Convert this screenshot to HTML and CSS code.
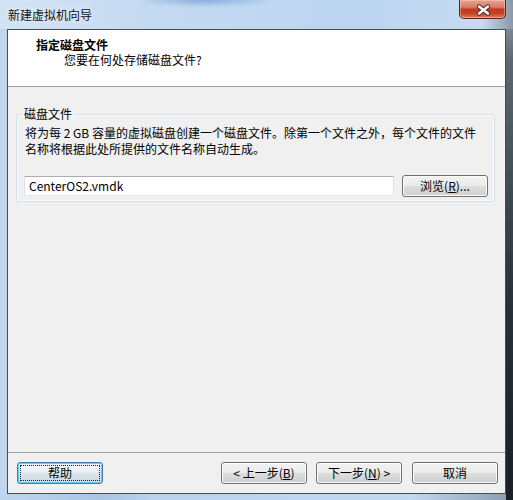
FILE: index.html
```html
<!DOCTYPE html>
<html lang="zh-CN">
<head>
<meta charset="utf-8">
<title>新建虚拟机向导</title>
<link rel="stylesheet" href="styles.css">
</head>
<body>
<div class="window">
  <div class="titlebar">
    <span class="title">新建虚拟机向导</span>
    <div class="close">
      <svg width="47" height="19" viewBox="0 0 47 19">
        <path d="M20 6.5 L29 13.5 M29 6.5 L20 13.5" stroke="#4a2a24" stroke-width="4.4" stroke-linecap="round" fill="none"/>
        <path d="M20 6.5 L29 13.5 M29 6.5 L20 13.5" stroke="#ffffff" stroke-width="2.4" stroke-linecap="round" fill="none"/>
      </svg>
    </div>
  </div>
  <div class="client">
    <div class="header">
      <div class="h-title">指定磁盘文件</div>
      <div class="h-sub">您要在何处存储磁盘文件?</div>
    </div>
    <div class="content">
      <fieldset class="group">
        <legend class="group-label">磁盘文件</legend>
        <p class="desc"><span class="line">将为每 2 GB 容量的虚拟磁盘创建一个磁盘文件。除第一个文件之外，每个文件的文件</span><span class="line">名称将根据此处所提供的文件名称自动生成。</span></p>
        <div class="file-row">
          <div class="input">CenterOS2.vmdk</div>
          <button class="btn browse">浏览(<u>R</u>)...</button>
        </div>
      </fieldset>
    </div>
    <div class="footer">
      <button class="btn focused"><span class="focus-ring">帮助</span></button>
      <div class="spacer"></div>
      <button class="btn">&lt; 上一步(<u>B</u>)</button>
      <button class="btn next">下一步(<u>N</u>) &gt;</button>
      <button class="btn cancel">取消</button>
    </div>
  </div>
</div>
</body>
</html>
```

FILE: styles.css
```css
html, body {
  margin: 0;
  padding: 0;
}

body {
  width: 513px;
  height: 500px;
  overflow: hidden;
  font-family: "Noto Sans CJK SC", "Noto Sans", sans-serif;
  font-size: 12px;
  color: #000;
}

.window {
  width: 513px;
  height: 500px;
  box-sizing: border-box;
  padding-bottom: 6px;
  display: flex;
  flex-direction: column;
  background:
    linear-gradient(to bottom, #9aa6b0 0%, #5c6873 12%, #27313a 60%, #1a2026 100%) right top / 7px 100% no-repeat,
    linear-gradient(to right, #c0d6ee 0%, #a9c4e4 20%, #bad2ee 30%, #c3d9f1 80%, #8c9eb0 99%);
}

.titlebar {
  height: 29px;
  flex: none;
  display: flex;
  justify-content: space-between;
  align-items: flex-start;
  padding-left: 8px;
  background:
    radial-gradient(ellipse 70px 8px at 205px 0px, rgba(120, 160, 215, 0.75), rgba(120, 160, 215, 0) 100%),
    linear-gradient(to right, #d2e3f5 0%, #c4daf2 30%, #bcd5f0 70%, #c6dbf1 94%, #8a98a6 100%);
}

.title {
  margin-top: 7px;
  line-height: 15px;
  color: #111;
  text-shadow: 0 0 6px rgba(255, 255, 255, 0.9);
}

.close {
  width: 47px;
  height: 19px;
  margin-right: 7px;
  box-sizing: border-box;
  border: 1px solid #5a2720;
  border-top: none;
  border-radius: 0 0 5px 5px;
  background: linear-gradient(to bottom, #e6a594 0%, #d97c66 40%, #c13a1f 52%, #c64226 75%, #df7f62 100%);
  box-shadow: inset 0 0 0 1px rgba(255, 210, 195, 0.45);
  position: relative;
}

.close svg {
  position: absolute;
  left: -1px;
  top: 0;
}

.client {
  flex: 1;
  margin: 0 7px;
  border: 1px solid #454c52;
  background: #f0f0f0;
  display: flex;
  flex-direction: column;
  min-height: 0;
}

.header {
  flex: none;
  height: 57px;
  box-sizing: border-box;
  background: #fff;
  border-bottom: 1px solid #a0a0a0;
  padding: 7px 0 0 28px;
}

.h-title {
  font-weight: bold;
  line-height: 15px;
}

.h-sub {
  line-height: 15px;
  padding-left: 28px;
}

.content {
  flex: 1;
  padding: 20px 10px 0 8px;
}

.group {
  margin: 0;
  padding: 4px 6px 4px 8px;
  border: 1px solid #d5dfe5;
  border-radius: 3px;
  box-shadow: inset 0 0 0 1px #fafbfc;
  min-width: 0;
}

.group-label {
  padding: 0 2px;
  margin-left: -3px;
  line-height: 14px;
}

.desc {
  margin: 0 0 18px 0;
  line-height: 16px;
}

.line {
  display: block;
  white-space: nowrap;
}

.file-row {
  display: flex;
  align-items: center;
  gap: 8px;
  height: 22px;
}

.input {
  flex: 1;
  height: 20px;
  box-sizing: border-box;
  margin-left: -1px;
  background: #fff;
  border: 1px solid #dde1e7;
  border-top-color: #abadb3;
  border-bottom-color: #e3e9ef;
  padding-left: 4px;
  line-height: 17px;
  font-size: 12px;
}

.btn {
  width: 86px;
  height: 22px;
  box-sizing: border-box;
  padding: 0;
  font-family: inherit;
  font-size: 12px;
  line-height: 18px;
  color: #000;
  border: 1px solid #707070;
  border-radius: 3px;
  background: linear-gradient(to bottom, #f2f2f2 0%, #ebebeb 48%, #dddddd 52%, #cfcfcf 100%);
  box-shadow: inset 0 0 0 1px #fcfcfc;
  display: flex;
  align-items: center;
  justify-content: center;
}

.btn u {
  text-decoration: underline;
  text-underline-offset: 1px;
}

.browse {
  flex: none;
}

.footer {
  flex: none;
  border-top: 1px solid #a0a0a0;
  padding: 9px 7px 9px 9px;
  display: flex;
  align-items: center;
}

.spacer {
  flex: 1;
}

.next {
  margin-left: 9px;
}

.cancel {
  margin-left: 10px;
}

.focused {
  border-color: #3c7fb1;
  background: linear-gradient(to bottom, #f3f7fa 0%, #e8eff4 48%, #d8e2ea 52%, #cfdbe4 100%);
  box-shadow: inset 0 0 0 1px #5ccff5;
  padding: 2px;
}

.focus-ring {
  flex: 1;
  align-self: stretch;
  display: flex;
  align-items: center;
  justify-content: center;
  border: 1px dotted #222;
}
```
